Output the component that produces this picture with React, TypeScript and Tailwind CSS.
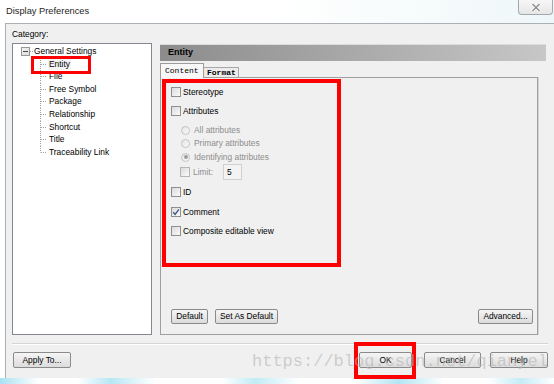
// App.tsx
import React from "react";

// Small Win7 style checkbox
const Check = ({ checked = false, dim = false }: { checked?: boolean; dim?: boolean }) => (
    <span className={`w-[10px] h-[10px] shrink-0 border ${dim ? "border-[#b5b5b5]" : "border-[#8e8f8f]"} bg-linear-to-br from-[#dadada] to-[#fbfbfb] flex items-center justify-center`}>
        {checked && (
            <svg width="8" height="8" viewBox="0 0 8 8">
                <path d="M1.2 4.2 L3.1 6.3 L6.9 1.3" fill="none" stroke="#3f5a8a" strokeWidth="1.4" />
            </svg>
        )}
    </span>
);

// Disabled radio
const Radio = ({ selected = false }: { selected?: boolean }) => (
    <span className="w-[9px] h-[9px] shrink-0 rounded-full border border-[#c3c3c3] bg-linear-to-br from-[#e4e4e4] to-[#fafafa] flex items-center justify-center">
        {selected && <span className="w-[4px] h-[4px] rounded-full bg-[#9d9d9d]" />}
    </span>
);

const Btn = ({ label, w, h = "h-[15px]" }: { label: string; w: string; h?: string }) => (
    <div className={`${w} ${h} shrink-0 border border-[#8a8a8a] rounded-[2px] bg-linear-to-b from-[#f5f5f5] to-[#dcdcdc] flex items-center justify-center text-[8.4px] text-black`}>
        {label}
    </div>
);

const treeItems = ["Entity", "File", "Free Symbol", "Package", "Relationship", "Shortcut", "Title", "Traceability Link"];

const App = () => {
    return (
        <div className="relative w-[554px] h-[384px] overflow-hidden bg-white flex flex-col font-['Liberation_Sans',Arial,sans-serif] text-black">

            {/* Barre de titre */}
            <div className="h-[23px] shrink-0 flex items-start bg-linear-to-r from-white via-white to-[#eef7f8]">
                <div className="h-[23px] flex items-center pl-[6px] text-[9.3px] text-[#1e1e1e]">Display Preferences</div>
                <div className="ml-auto mr-[1px] w-[35px] h-[15px] border border-t-0 border-[#a3a8ae] rounded-b-[4px] bg-linear-to-b from-[#f7f7f7] to-[#e6e6e6] flex items-center justify-center">
                    <svg width="10" height="9" viewBox="0 0 10 9">
                        <path d="M1.5 1 L8.5 8 M8.5 1 L1.5 8" stroke="#ffffff" strokeWidth="3" />
                        <path d="M1.5 1 L8.5 8 M8.5 1 L1.5 8" stroke="#8b8f94" strokeWidth="1.5" />
                    </svg>
                </div>
            </div>

            {/* Corps du dialogue */}
            <div className="flex-1 ml-[5px] border-l border-t border-[#aab0b5] bg-[#f0f0f0] pl-[6px] pr-[6px] flex flex-col">
                <div className="pt-[3px] h-[17px] leading-[14px] text-[8.4px]">Category:</div>

                <div className="mt-[2px] h-[292px] flex">
                    {/* Arbre */}
                    <div className="w-[140px] shrink-0 border border-[#828790] bg-white pt-[1px] text-[8.4px]">
                        <div className="h-[12.6px] flex items-center">
                            <span className="ml-[8px] w-[9px] h-[9px] border border-[#979797] bg-linear-to-br from-[#f2f2f2] to-[#dcdcdc] flex items-center justify-center">
                                <span className="w-[5px] h-[1px] bg-[#4a4a4a]" />
                            </span>
                            <span className="w-[3px] border-t border-dotted border-[#a0a0a0]" />
                            <span className="pl-[1px] pr-[1px]">General Settings</span>
                        </div>
                        {treeItems.map((t, i) => (
                            <div key={t} className="h-[12.6px] flex items-center">
                                <svg className="ml-[27px] shrink-0" width="8" height="12.6" viewBox="0 0 8 12.6">
                                    <line x1="0.5" y1="0" x2="0.5" y2={i === treeItems.length - 1 ? 6.5 : 12.6} stroke="#a0a0a0" strokeDasharray="1 1" />
                                    <line x1="1" y1="6.5" x2="7" y2="6.5" stroke="#a0a0a0" strokeDasharray="1 1" />
                                </svg>
                                <span className={`ml-[0px] px-[1px] ${i === 0 ? "bg-[#f3f3f3]" : ""}`}>{t}</span>
                            </div>
                        ))}
                    </div>

                    {/* Panneau de droite */}
                    <div className="ml-[8px] flex-1 flex flex-col">
                        <div className="mt-[1px] mr-[2px] h-[17px] shrink-0 border-t border-[#dcdcdc] bg-linear-to-r from-[#8c8c8c] to-[#c7c7c7] flex items-center pl-[8px] text-[9px] font-bold">
                            Entity
                        </div>

                        {/* Onglets */}
                        <div className="mt-[2px] h-[14px] shrink-0 flex items-end font-['Liberation_Mono',monospace] text-[8px] relative z-10">
                            <div className="w-[44px] h-[15px] border border-b-0 border-[#9c9c9c] bg-[#f7f7f7] flex items-center pl-[4px] translate-y-[1px]">Content</div>
                            <div className="w-[35px] h-[10px] border border-l-0 border-b-0 border-[#a8a8a8] bg-[#ececec] flex items-center pl-[3px] font-bold">Format</div>
                        </div>

                        <div className="mr-[10px] flex-1 border border-[#9f9f9f] shadow-[1px_0_0_#d4d4d4] bg-[#f0f0f0] flex flex-col text-[8.4px]">
                            <div className="pl-[10px] pt-[8px] flex flex-col">
                                <div className="h-[12px] flex items-center gap-[2px]"><Check /><span>Stereotype</span></div>
                                <div className="mt-[7px] h-[12px] flex items-center gap-[2px]"><Check /><span>Attributes</span></div>
                                <div className="mt-[7px] h-[12px] pl-[10px] flex items-center gap-[4px] text-[#8d8d8d]"><Radio /><span>All attributes</span></div>
                                <div className="mt-[1px] h-[12px] pl-[10px] flex items-center gap-[4px] text-[#8d8d8d]"><Radio /><span>Primary attributes</span></div>
                                <div className="mt-[2px] h-[12px] pl-[10px] flex items-center gap-[4px] text-[#8d8d8d]"><Radio selected /><span>Identifying attributes</span></div>
                                <div className="mt-[1px] h-[16px] pl-[9px] flex items-center text-[#8d8d8d]">
                                    <Check dim />
                                    <span className="ml-[3px]">Limit:</span>
                                    <div className="ml-[10px] w-[19px] h-[16px] border border-[#d0d0d0] bg-[#f3f3f3] flex items-center pl-[3px] text-black">5</div>
                                </div>
                                <div className="mt-[6px] h-[12px] flex items-center gap-[2px]"><Check /><span>ID</span></div>
                                <div className="mt-[8px] h-[12px] flex items-center gap-[2px]"><Check checked /><span>Comment</span></div>
                                <div className="mt-[7px] h-[12px] flex items-center gap-[2px]"><Check /><span>Composite editable view</span></div>
                            </div>

                            <div className="mt-auto mb-[10px] pl-[10px] pr-[4px] flex">
                                <Btn label="Default" w="w-[37px]" />
                                <div className="ml-[7px]"><Btn label="Set As Default" w="w-[63px]" /></div>
                                <div className="ml-auto"><Btn label="Advanced..." w="w-[55px]" /></div>
                            </div>
                        </div>
                    </div>
                </div>

                {/* Séparateur */}
                <div className="mt-[8px] h-[2px] border-t border-[#d5d5d5] border-b border-b-white" />

                {/* Boutons du bas */}
                <div className="mt-[7px] flex">
                    <div className="ml-[1px]"><Btn label="Apply To..." w="w-[58px]" h="h-[16px]" /></div>
                    <div className="ml-auto flex">
                        <Btn label="OK" w="w-[53px]" h="h-[16px]" />
                        <div className="ml-[12px]"><Btn label="Cancel" w="w-[57px]" h="h-[16px]" /></div>
                        <div className="ml-[9px]"><Btn label="Help" w="w-[58px]" h="h-[16px]" /></div>
                    </div>
                </div>
            </div>

            {/* Bureau visible sous la fenêtre */}
            <div className="h-[6px] shrink-0 bg-[linear-gradient(90deg,#a9e1f2_0%,#ffffff_7%,#ffffff_14%,#b7e7f4_20%,#ffffff_28%,#ffffff_40%,#c2ebf6_46%,#ffffff_54%,#ffffff_64%,#b3e5f3_72%,#ffffff_80%,#ffffff_88%,#c5ecf7_94%,#ffffff_100%)]" />

            {/* Annotations rouges */}
            <div className="absolute left-[31px] top-[56px] w-[60px] h-[18px] border-[3px] border-[#ff0000]" />
            <div className="absolute left-[162px] top-[79px] w-[179px] h-[188px] border-[4px] border-[#ff0000]" />
            <div className="absolute left-[354px] top-[342px] w-[62px] h-[37px] border-[4px] border-[#ff0000]" />

            {/* Filigrane */}
            <div className="absolute left-[252px] top-[352px] leading-[20px] text-[17px] font-['Liberation_Mono',monospace] text-[#b4b4b4]/60 pointer-events-none whitespace-nowrap">
                https://blog.csdn.net/qianyel
            </div>
        </div>
    );
};

export default App;
